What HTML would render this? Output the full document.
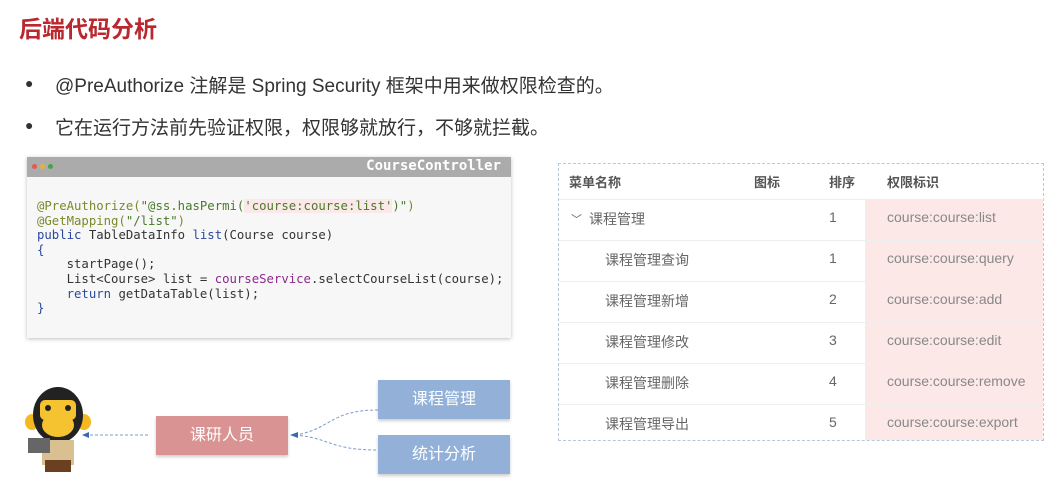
<!DOCTYPE html><html><head><meta charset="utf-8"><style>
body{margin:0;width:1052px;height:491px;background:#fff;position:relative;overflow:hidden;font-family:"Liberation Sans","Noto Sans CJK SC",sans-serif}
.a{position:absolute}
.code{font-family:"DejaVu Sans Mono","Liberation Mono",monospace;font-size:12.3px;line-height:14.6px;white-space:pre;color:#333}
.row{position:absolute;left:0;width:486px;height:41px;border-top:1px solid #eee;font-size:14px;color:#666}
.row span{position:absolute;top:9px}
</style></head><body>
<div class="a" style="left:19px;top:10px;font-size:23px;color:#b8282e;font-weight:bold">后端代码分析</div>
<div class="a" style="left:25px;top:75px;font-size:14px;color:#333">●</div>
<div class="a" style="left:25px;top:117px;font-size:14px;color:#333">●</div>
<div class="a" style="left:55px;top:71px;font-size:19px;color:#333">@PreAuthorize 注解是 Spring Security 框架中用来做权限检查的。</div>
<div class="a" style="left:55px;top:113px;font-size:19px;color:#333">它在运行方法前先验证权限，权限够就放行，不够就拦截。</div>

<div class="a" style="left:27px;top:157px;width:484px;height:181px;background:#f7f7f7;box-shadow:0 1px 4px rgba(0,0,0,.25)">
<div style="height:20px;background:#ababab;position:relative">
<span class="a" style="left:5px;top:7px;width:5px;height:5px;border-radius:50%;background:#e05a4f"></span>
<span class="a" style="left:13px;top:7px;width:5px;height:5px;border-radius:50%;background:#e3b23c"></span>
<span class="a" style="left:21px;top:7px;width:5px;height:5px;border-radius:50%;background:#3ca84a"></span>
<span class="a code" style="right:10px;top:2px;color:#fff;font-size:14px;font-weight:bold">CourseController</span></div>
<div class="a code" style="left:10px;top:42px"><span style="color:#7a8a2a">@PreAuthorize(</span><span style="color:#4a7a2a">"@ss.hasPermi(</span><span style="color:#4a7a2a;background:#fbe8e8">'course:course:list'</span><span style="color:#4a7a2a">)"</span><span style="color:#7a8a2a">)</span>
<span style="color:#7a8a2a">@GetMapping(</span><span style="color:#4a7a2a">"/list"</span><span style="color:#7a8a2a">)</span>
<span style="color:#2a4aa0">public</span> TableDataInfo <span style="color:#2a4aa0">list</span>(Course course)
<span style="color:#2a4aa0">{</span>
    startPage();
    List&lt;Course&gt; list = <span style="color:#8a2a8a">courseService</span>.selectCourseList(course);
    <span style="color:#2a4aa0">return</span> getDataTable(list);
<span style="color:#2a4aa0">}</span></div></div>

<div class="a" style="left:558px;top:163px;width:486px;height:278px;border:1px dashed #b8c8d8;box-sizing:border-box">
<div class="a" style="left:306px;top:35px;width:178px;height:241px;background:#fde8e8"></div>
<div class="a" style="left:0;top:0;width:484px;height:35px;font-size:13px;color:#555;font-weight:bold">
<span class="a" style="left:10px;top:8px">菜单名称</span><span class="a" style="left:195px;top:8px">图标</span><span class="a" style="left:270px;top:8px">排序</span><span class="a" style="left:328px;top:8px">权限标识</span></div>
<div class="row" style="top:35px"><span style="left:12px;font-size:11px;top:11px">﹀</span><span style="left:30px">课程管理</span><span style="left:270px">1</span><span style="left:328px;color:#888">course:course:list</span></div>
<div class="row" style="top:76px"><span style="left:46px">课程管理查询</span><span style="left:270px">1</span><span style="left:328px;color:#888">course:course:query</span></div>
<div class="row" style="top:117px"><span style="left:46px">课程管理新增</span><span style="left:270px">2</span><span style="left:328px;color:#888">course:course:add</span></div>
<div class="row" style="top:158px"><span style="left:46px">课程管理修改</span><span style="left:270px">3</span><span style="left:328px;color:#888">course:course:edit</span></div>
<div class="row" style="top:199px"><span style="left:46px">课程管理删除</span><span style="left:270px">4</span><span style="left:328px;color:#888">course:course:remove</span></div>
<div class="row" style="top:240px"><span style="left:46px">课程管理导出</span><span style="left:270px">5</span><span style="left:328px;color:#888">course:course:export</span></div>
</div>

<svg class="a" style="left:0;top:360px" width="520" height="131">
<path d="M85 75 H150" stroke="#7a9cc8" stroke-dasharray="3,2" fill="none"/><path d="M82 75 l7 -3 v6z" fill="#3a6ab0"/>
<path d="M295 75 C330 70,330 50,378 50" stroke="#7a9cc8" stroke-dasharray="3,2" fill="none"/>
<path d="M295 75 C330 78,330 90,378 90" stroke="#7a9cc8" stroke-dasharray="3,2" fill="none"/>
<path d="M290 75 l8 -3 v6z" fill="#3a6ab0"/>
<ellipse cx="32" cy="62" rx="7" ry="8" fill="#f5b820"/><ellipse cx="84" cy="62" rx="7" ry="8" fill="#f5b820"/>
<ellipse cx="58" cy="55" rx="25" ry="28" fill="#222"/>
<rect x="40" y="40" width="36" height="20" rx="5" fill="#f5c330"/>
<ellipse cx="58" cy="65" rx="16" ry="12" fill="#f5c330"/>
<circle cx="48" cy="48" r="3" fill="#222"/><circle cx="68" cy="48" r="3" fill="#222"/>
<rect x="42" y="80" width="32" height="25" fill="#d8c090"/><rect x="45" y="100" width="26" height="12" fill="#6a4020"/>
<rect x="28" y="78" width="22" height="15" fill="#666"/>
</svg>
<div class="a" style="left:156px;top:416px;width:132px;height:39px;background:#d99393;color:#fff;font-size:16px;text-align:center;line-height:39px;box-shadow:0 2px 3px rgba(0,0,0,.2)">课研人员</div>
<div class="a" style="left:378px;top:380px;width:132px;height:39px;background:#93b1d8;color:#fff;font-size:16px;text-align:center;line-height:39px;box-shadow:0 2px 3px rgba(0,0,0,.2)">课程管理</div>
<div class="a" style="left:378px;top:435px;width:132px;height:39px;background:#93b1d8;color:#fff;font-size:16px;text-align:center;line-height:39px;box-shadow:0 2px 3px rgba(0,0,0,.2)">统计分析</div>
</body></html>
